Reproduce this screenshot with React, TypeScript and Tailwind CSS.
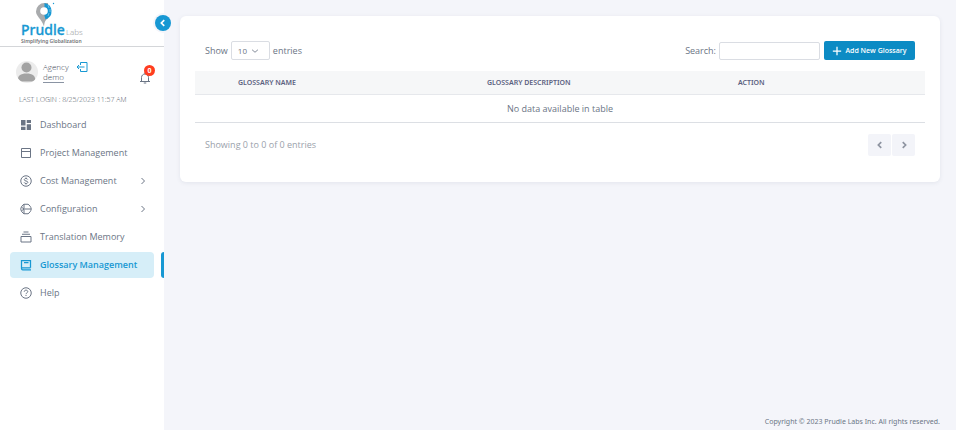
import type { ReactNode } from "react";

type IconProps = { children: ReactNode; className?: string };

function Icon({ children, className = "size-3" }: IconProps) {
  return (
    <svg
      viewBox="0 0 24 24"
      className={`shrink-0 ${className}`}
      fill="none"
      stroke="currentColor"
      strokeWidth="2"
      aria-hidden="true"
    >
      {children}
    </svg>
  );
}

type NavEntry = { label: string; icon: ReactNode; expandable?: boolean; active?: boolean };

const NAV: NavEntry[] = [
  {
    label: "Dashboard",
    icon: (
      <g fill="currentColor" stroke="none">
        <path d="M2 2h9v11H2zM13.500 2H22v6h-8.500zM2 15.500h9V22H2zM13.500 10.500H22V22h-8.500z" />
      </g>
    ),
  },
  {
    label: "Project Management",
    icon: <path d="M3 3h18v18H3zM3 9h18" />,
  },
  {
    label: "Cost Management",
    expandable: true,
    icon: (
      <>
        <circle cx="12" cy="12" r="10.500" />
        <path d="M15.500 9c-.6-1.300-1.800-2-3.500-2-2 0-3.400 1-3.400 2.500 0 3.500 7 1.600 7 5 0 1.500-1.500 2.500-3.600 2.500-1.900 0-3.200-.8-3.700-2.200M12 5v2M12 17v2" />
      </>
    ),
  },
  {
    label: "Configuration",
    expandable: true,
    icon: (
      <>
        <path
          d="M8 2.500h8c3 1.500 6 5.500 6.500 9.500-.5 4-3.500 8-6.500 9.500H8C5 20 2 16 1.500 12 2 8 5 4 8 2.500z"
          strokeLinejoin="round"
        />
        <path d="M8 2.500v19M9 12h13M2.500 8L8 12l-5.500 4" />
      </>
    ),
  },
  {
    label: "Translation Memory",
    icon: <path d="M2 11h20v11H2zM4 6.500h16M7 2h10" />,
  },
  {
    label: "Glossary Management",
    active: true,
    icon: <path d="M21 17.500V3H3v16c0 1.500 1 2.500 2.500 2.500H22M3 17.500h18M8 7h9" strokeWidth="2.500" />,
  },
  {
    label: "Help",
    icon: (
      <>
        <circle cx="12" cy="12" r="10.500" />
        <path d="M8.500 9.500c0-2 1.500-3.200 3.500-3.200s3.500 1.200 3.500 3c0 2.400-3.500 2.500-3.500 5M12 16v2" />
      </>
    ),
  },
];

function Logo() {
  return (
    <a href="#home" aria-label="Prudle Labs" className="ml-5 block w-16">
      <svg viewBox="0 0 64 44" className="block h-[44px] w-16">
        <path
          d="M24.500 3a8.500 8.500 0 0 0-8.500 8.500c0 5 5.500 7 8 15 .8-6 2-7 4-8V3z"
          fill="#a9abad"
        />
        <path d="M24.500 3a8.500 8.500 0 0 1 1 16.500l-1-3.500z" fill="#1798d3" />
        <circle cx="24" cy="11" r="3.800" fill="#fff" />
        <path
          d="M28 5l1 3M30 9l0 3M29 13l-1 3"
          stroke="#a5daf2"
          strokeWidth=".6"
          fill="none"
        />
        <circle cx="33.500" cy="3.500" r=".7" fill="#1798d3" />
        <text
          x="1"
          y="35"
          fontSize="14"
          fontWeight="500"
          fill="#1798d3"
          stroke="#1798d3"
          strokeWidth=".3"
          fontFamily="Noto Sans, sans-serif"
        >
          Prudle
        </text>
        <text x="46" y="35" fontSize="8" fontWeight="300" fill="#8f9295" fontFamily="Open Sans, sans-serif">
          Labs
        </text>
        <text x="1" y="43" fontSize="5" fontWeight="600" fill="#707376" fontFamily="Noto Sans, sans-serif">
          Simplifying Globalization
        </text>
      </svg>
    </a>
  );
}

function Sidebar() {
  return (
    <aside className="relative w-[164px] shrink-0 bg-white">
      <div className="flex h-[47px] items-start border-b border-[#d4d6d9]">
        <Logo />
      </div>
      <button
        type="button"
        aria-label="Collapse menu"
        className="absolute top-[15px] -right-[7px] flex size-4 items-center justify-center rounded-full bg-[#1798d3] text-white shadow-[0_0_0_2px_#f4f5fa]"
      >
        <Icon className="size-[10px]">
          <path d="M15 5l-7 7 7 7" strokeWidth="4" />
        </Icon>
      </button>

      <div className="flex h-[46px] items-center pt-3 pr-[13px] pl-4">
        <svg viewBox="0 0 22 22" className="mb-2 size-[22px] shrink-0" aria-hidden="true">
          <clipPath id="avatar">
            <circle cx="11" cy="11" r="11" />
          </clipPath>
          <g clipPath="url(#avatar)">
            <rect width="22" height="22" fill="#ececec" />
            <circle cx="10.500" cy="6.500" r="5" fill="#a3a3a3" />
            <path d="M1.500 20.500c0-6 3-8 9-8s9 2 9 8z" fill="#a3a3a3" />
          </g>
        </svg>
        <div className="mb-2 ml-[5px] text-[8px] leading-[11px] font-light text-[#3d4756]">
          <div>Agency</div>
          <a href="#profile" className="block w-fit border-b border-[#8a94a3] leading-[10px]">
            demo
          </a>
        </div>
        <a href="#logout" aria-label="Log out" className="mb-[18px] ml-[7px] text-[#1798d3]">
          <Icon>
            <path d="M9 8V3h13v18H9v-5M17 12H2M6 8l-4 4 4 4" />
          </Icon>
        </a>
        <button type="button" aria-label="Notifications" className="relative mt-1 ml-auto">
          <Icon>
            <path d="M2 19h20M5 19v-8c0-4 3-7 7-7s7 3 7 7v8M9.500 22h5M12 1v3" />
          </Icon>
          <span className="absolute -top-[7px] left-[5px] flex size-[11px] items-center justify-center rounded-full bg-[#ff3d1f] text-[7px] font-bold text-white">
            0
          </span>
        </button>
      </div>

      <p className="h-[19px] pt-[1px] pl-[19px] text-[7px] leading-[12px] font-light text-[#4f5966]">
        LAST LOGIN : 8/25/2023 11:57 AM
      </p>

      <nav className="flex flex-col gap-[2px]">
        {NAV.map((item) => (
          <div key={item.label} className="flex justify-between">
            <a
              href="#nav"
              aria-current={item.active ? "page" : undefined}
              className={`ml-[10px] flex h-[26px] w-36 items-center gap-2 rounded-sm pr-[5px] pl-[10px] ${
                item.active ? "bg-[#d6eef8] font-semibold text-[#1798d3]" : ""
              }`}
            >
              <Icon>{item.icon}</Icon>
              <span className="flex-1">{item.label}</span>
              {item.expandable && (
                <Icon>
                  <path d="M9 6l6 6-6 6" />
                </Icon>
              )}
            </a>
            {item.active && <span className="w-[3px] rounded-l-sm bg-[#1798d3]" />}
          </div>
        ))}
      </nav>
    </aside>
  );
}

function GlossaryCard() {
  return (
    <section className="rounded-md bg-white px-[15px] pt-[25px] pb-[26px] shadow-[0_1px_4px_#e2e4ec]">
      <div className="flex items-center justify-between px-[10px]">
        <div className="flex items-center">
          <label htmlFor="page-size">Show</label>
          <span className="relative mx-[3px] flex items-center">
            <select
              id="page-size"
              defaultValue="10"
              className="h-[19px] w-[39px] appearance-none rounded-xs border border-[#dadde3] bg-white pl-[6px] text-[8px]"
            >
              <option>10</option>
              <option>25</option>
              <option>50</option>
            </select>
            <Icon className="pointer-events-none absolute right-[10px] size-[10px]">
              <path d="M5 9l7 6 7-6" />
            </Icon>
          </span>
          <label htmlFor="page-size">entries</label>
        </div>
        <div className="flex items-center">
          <label htmlFor="search">Search:</label>
          <input
            id="search"
            type="search"
            className="ml-[3px] h-[18px] w-[101px] rounded-xs border border-[#dadde3] px-1 outline-none"
          />
          <button
            type="button"
            className="ml-1 flex h-[19px] w-[91px] items-center justify-center gap-[3px] rounded-xs bg-[#0c8bc4] text-[7px] font-semibold whitespace-nowrap text-white"
          >
            <Icon className="size-[10px]">
              <path d="M12 2v20M2 12h20" strokeWidth="3" />
            </Icon>
            Add New Glossary
          </button>
        </div>
      </div>

      <table className="mt-[11px] w-full table-fixed border-separate border-spacing-0">
        <thead>
          <tr className="h-6 bg-[#f6f7f8] text-left font-['Noto_Sans',sans-serif] text-[7px] text-[#5b6180]">
            <th scope="col" className="w-[40%] border-b border-[#e6e8ec] pl-[43px] font-semibold">GLOSSARY NAME</th>
            <th scope="col" className="border-b border-[#e6e8ec] font-semibold">GLOSSARY DESCRIPTION</th>
            <th scope="col" className="w-[187px] border-b border-[#e6e8ec] font-semibold">ACTION</th>
          </tr>
        </thead>
        <tbody>
          <tr className="h-7">
            <td colSpan={3} className="border-b border-[#dcdfe4] text-center">
              No data available in table
            </td>
          </tr>
        </tbody>
      </table>

      <div className="mt-[11px] flex items-center justify-between px-[10px]">
        <p className="text-[#9aa1ab]">Showing 0 to 0 of 0 entries</p>
        <div className="flex gap-[1px] text-[#8d93a0]">
          <button type="button" aria-label="Previous page" className="flex h-[22px] w-[23px] items-center justify-center rounded-xs bg-[#f3f4f9]">
            <Icon className="size-[10px]">
              <path d="M15 5l-7 7 7 7" strokeWidth="4" />
            </Icon>
          </button>
          <button type="button" aria-label="Next page" className="flex h-[22px] w-[23px] items-center justify-center rounded-xs bg-[#f3f4f9]">
            <Icon className="size-[10px]">
              <path d="M9 5l7 7-7 7" strokeWidth="4" />
            </Icon>
          </button>
        </div>
      </div>
    </section>
  );
}

export default function App() {
  return (
    <div className="flex min-h-screen bg-[#f4f5fa] font-['Open_Sans',sans-serif] text-[9px] leading-3 text-[#6b7585]">
      <Sidebar />
      <main className="flex min-w-0 flex-1 flex-col justify-between px-4 pt-4">
        <GlossaryCard />
        <footer className="pb-[2px] text-right font-['Noto_Sans',sans-serif] text-[7px]">
          Copyright © 2023 Prudle Labs Inc. All rights reserved.
        </footer>
      </main>
    </div>
  );
}
